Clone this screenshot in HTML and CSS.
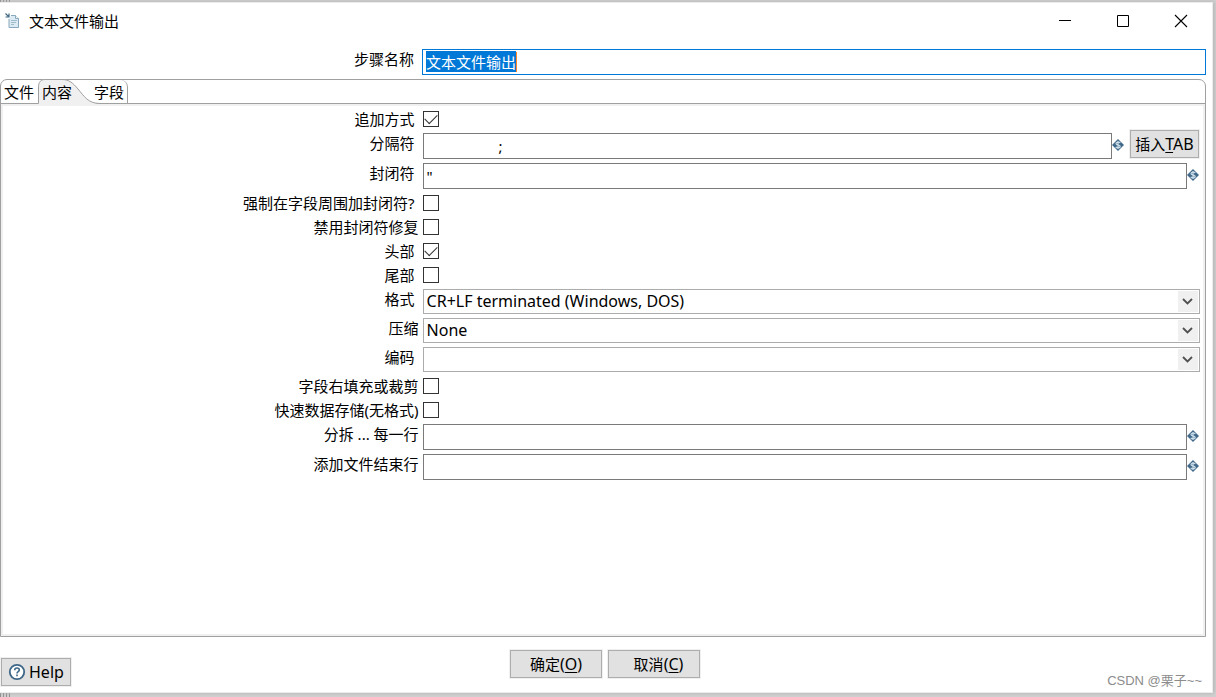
FILE: index.html
```html
<!DOCTYPE html>
<html lang="zh-CN">
<head>
<meta charset="utf-8">
<title>文本文件输出</title>
<link rel="stylesheet" href="styles.css">
</head>
<body>
<svg class="defs" aria-hidden="true">
  <symbol id="var" viewBox="0 0 12 14">
    <path d="M6 1L12 7L6 13L0 7Z" fill="#41698a"/>
    <path d="M8.200 5C7.500 3.800 4 3.800 4 5.700C4 7.300 8.200 6.700 8.200 8.500C8.200 10.300 4.400 10 3.800 8.900M6 3V11" fill="none" stroke="#c9dbe6" stroke-width="1.300"/>
  </symbol>
  <symbol id="arrow" viewBox="0 0 20 21">
    <path d="M5 8L9.500 12.500L14 8" fill="none" stroke="#505050" stroke-width="1.800"/>
  </symbol>
</svg>
<main class="window">
  <header class="titlebar">
    <svg class="app-icon" width="16" height="16" viewBox="0 0 16 16" aria-hidden="true">
      <path d="M4 6V14.500H13.500V5.500L10.500 2.500H6" fill="#dcebf3" stroke="#88a9bd"/>
      <path d="M10.500 2.500V5.500H13.500" fill="#fff" stroke="#88a9bd"/>
      <path d="M6 7.500H12M6 9.500H11M6 11.500H9" stroke="#9fbccb"/>
      <path d="M0.500 0.500L3.500 3.500M4 0.500V4H0.500" fill="none" stroke="#446b86" stroke-width="1.200"/>
    </svg>
    <h1 class="title">文本文件输出</h1>
    <button class="win-btn" type="button" aria-label="最小化"><svg width="14" height="14" viewBox="0 0 14 14"><path d="M1 6.500H13" stroke="#000"/></svg></button>
    <button class="win-btn" type="button" aria-label="最大化"><svg width="14" height="14" viewBox="0 0 14 14"><path d="M1.500 1.500H12.500V12.500H1.500Z" fill="none" stroke="#000"/></svg></button>
    <button class="win-btn" type="button" aria-label="关闭"><svg width="14" height="14" viewBox="0 0 14 14"><path d="M1 1L13 13M13 1L1 13" stroke="#000" stroke-width="1.1"/></svg></button>
  </header>

  <div class="step">
    <label class="label spaced" for="step">步骤名称</label>
    <div class="step-field">
      <input class="input active" id="step" type="text" value="文本文件输出" autofocus>
      <span class="caret"></span>
    </div>
  </div>

  <section class="panel">
    <nav class="tabs" role="tablist">
      <button class="tab first" type="button" role="tab">文件</button>
      <button class="tab selected" type="button" role="tab" aria-selected="true">
        <svg class="tab-shape" width="62" height="25" viewBox="0 0 62 25" aria-hidden="true">
          <path d="M0.500 25V8C0.500 3 3 0.500 7 0.500H24C31 0.500 35 4 40 10C46 17 50 24.500 62 24.500V25Z" fill="#f0f0f0"/>
          <path d="M0.500 24.500V8C0.500 3 3 0.500 7 0.500H24C31 0.500 35 4 40 10C46 17 50 24.500 62 24.500" fill="none" stroke="#a0a0a0"/>
        </svg>
        <span class="tab-text">内容</span>
      </button>
      <button class="tab last" type="button" role="tab">字段</button>
    </nav>
    <form class="form">
      <div class="row check"><label class="label spaced" for="append">追加方式</label><input class="box" id="append" type="checkbox" checked></div>
      <div class="row"><label class="label spaced" for="sep">分隔符</label>
        <div class="field"><input class="input" id="sep" type="text" value="&#9;;"><svg class="var" aria-hidden="true"><use href="#var"/></svg><button class="btn insert" type="button">插入<span class="latin"><u>T</u>AB</span></button></div></div>
      <div class="row"><label class="label spaced" for="enc">封闭符</label>
        <div class="field"><input class="input" id="enc" type="text" value="&quot;"><svg class="var" aria-hidden="true"><use href="#var"/></svg></div></div>
      <div class="row check"><label class="label spaced" for="force">强制在字段周围加封闭符?</label><input class="box" id="force" type="checkbox"></div>
      <div class="row check"><label class="label" for="fix">禁用封闭符修复</label><input class="box" id="fix" type="checkbox"></div>
      <div class="row check"><label class="label spaced" for="head">头部</label><input class="box" id="head" type="checkbox" checked></div>
      <div class="row check"><label class="label spaced" for="foot">尾部</label><input class="box" id="foot" type="checkbox"></div>
      <div class="row"><label class="label spaced" for="format">格式</label>
        <div class="combo"><select class="select" id="format"><option>CR+LF terminated (Windows, DOS)</option></select><svg class="arrow" aria-hidden="true"><use href="#arrow"/></svg></div></div>
      <div class="row"><label class="label" for="zip">压缩</label>
        <div class="combo"><select class="select" id="zip"><option>None</option></select><svg class="arrow" aria-hidden="true"><use href="#arrow"/></svg></div></div>
      <div class="row"><label class="label spaced" for="coding">编码</label>
        <div class="combo"><select class="select" id="coding"><option></option></select><svg class="arrow" aria-hidden="true"><use href="#arrow"/></svg></div></div>
      <div class="row check"><label class="label" for="pad">字段右填充或裁剪</label><input class="box" id="pad" type="checkbox"></div>
      <div class="row check"><label class="label" for="fast">快速数据存储(无格式)</label><input class="box" id="fast" type="checkbox"></div>
      <div class="row"><label class="label" for="split">分拆 ... 每一行</label>
        <div class="field"><input class="input" id="split" type="text"><svg class="var" aria-hidden="true"><use href="#var"/></svg></div></div>
      <div class="row"><label class="label" for="endline">添加文件结束行</label>
        <div class="field"><input class="input" id="endline" type="text"><svg class="var" aria-hidden="true"><use href="#var"/></svg></div></div>
    </form>
  </section>

  <footer class="footer">
    <div class="side"><button class="btn help" type="button"><svg width="18" height="18" viewBox="0 0 18 18" aria-hidden="true"><circle cx="9" cy="9" r="7.200" fill="#fff" stroke="#3d6687" stroke-width="1.800"/><path d="M6.700 7.200C6.700 4.300 11.300 4.400 11.300 7.100C11.300 8.700 9 8.700 9 10.400M9 11.600V13.200" fill="none" stroke="#3d6687" stroke-width="1.600"/></svg><span class="latin">Help</span></button></div>
    <div class="actions"><button class="btn action" type="button">确定<span class="latin">(<u>O</u>)</span></button><button class="btn action cancel" type="button">取消<span class="latin">(<u>C</u>)</span></button></div>
    <div class="side mark">CSDN @栗子~~</div>
  </footer>
</main>
<script src="main.js"></script>
</body>
</html>
```
FILE: styles.css
```css
* { box-sizing: border-box; }
body {
  margin: 0;
  min-height: 100vh;
  display: flex;
  padding: 3px 4px 5px 0;
  background:
    repeating-linear-gradient(90deg, #909090 0 1px, #d0d0d0 1px 3px) 0 0 / 10px 100% no-repeat,
    #d0d0d0;
  color: #000;
  font: 15px/20px "Noto Sans", "Noto Sans CJK SC", sans-serif;
}
button, input, select { font: inherit; color: inherit; }
.defs { position: absolute; width: 0; height: 0; }
.window {
  flex: 1;
  min-width: 0;
  display: flex;
  flex-direction: column;
  background: #fff;
  box-shadow: 0 0 0 1px #ececec, 1px 0 4px 1px #b0b0b0;
}
.titlebar { display: flex; align-items: center; height: 36px; padding: 0 2px 0 5px; }
.app-icon { margin-right: 8px; }
.title { flex: 1; margin: 0; font-size: 15px; font-weight: 400; }
.win-btn {
  width: 58px; height: 36px; padding: 0;
  display: grid; place-items: center;
  border: 0; background: none;
}
.step { display: grid; grid-template-columns: 35% 1fr; margin: 10px 6px 4px 0; }
.label { text-align: right; line-height: 20px; padding-right: 4px; white-space: nowrap; }
.spaced { padding-right: 8px; }
.step-field { position: relative; display: flex; }
.input {
  flex: 1; min-width: 0; width: 100%; height: 26px;
  padding: 0 3px; border: 1px solid #7a7a7a; border-radius: 0;
  background: #fff; outline: 0; tab-size: 72px;
}
.active { border-color: #0078d7; padding-bottom: 2px; }
.active::selection { background: #0078d7; color: #fff; }
.caret { position: absolute; left: 94px; top: 3px; width: 1px; height: 20px; background: #ff8728; }
.panel {
  flex: 1;
  margin-right: 6px;
  display: flex; flex-direction: column;
  border: 1px solid #a0a0a0;
  border-radius: 7px 7px 0 0;
}
.tabs { display: flex; height: 24px; border-bottom: 1px solid #a0a0a0; }
.tab { position: relative; height: 24px; padding: 0 3px; border: 0; background: none; line-height: 24px; }
.first { padding-right: 4px; }
.selected { padding: 0 18px 0 4px; }
.tab-shape { position: absolute; left: 0; top: -1px; }
.tab-text { position: relative; }
.last { padding-left: 4px; border-right: 1px solid #a0a0a0; border-radius: 0 7px 0 0; }
.form {
  flex: 1;
  display: flex; flex-direction: column; gap: 4px;
  padding: 3px 0;
  border: 2px solid #f0f0f0;
}
.row { display: grid; grid-template-columns: 35% 1fr; padding: 0 3px 0 1px; }
.check { align-items: center; }
.box {
  appearance: none;
  width: 16px; height: 16px; margin: 0;
  border: 1px solid #333; background: #fff;
  display: grid; place-items: center;
}
.box:checked::before {
  content: "";
  width: 11px; height: 6px; margin-bottom: 3px;
  border: solid #333; border-width: 0 0 1px 1px;
  transform: rotate(-45deg);
}
.field { display: flex; align-items: center; min-width: 0; height: 26px; padding-right: 1px; }
.var { width: 12px; height: 14px; flex: none; margin-bottom: 2px; }
.btn {
  height: 28px; padding: 0 5px;
  border: 1px solid #adadad; background: #e1e1e1;
  box-shadow: 0 0 0 1px #f0f0f0;
  white-space: nowrap; line-height: 26px;
}
.latin { font-size: 16px; }
u { text-underline-offset: 2px; text-decoration-skip-ink: none; }
.insert { width: 69px; padding: 0; margin: 0 0 4px 6px; }
.combo { position: relative; display: grid; }
.select {
  appearance: none; width: 100%; height: 25px;
  padding: 0 22px 2px 3px;
  border: 1px solid #acacac; border-radius: 0; background: #fff;
  font-size: 16px;
}
.arrow { position: absolute; right: 2px; top: 2px; width: 20px; height: 21px; background: #f0f0f0; pointer-events: none; }
.footer { display: flex; justify-content: space-between; margin-right: 2px; padding-top: 13px; height: 55px; }
.side { flex: 1; display: flex; align-items: flex-end; padding: 0 8px 6px 1px; }
.help { display: flex; align-items: center; gap: 3px; padding: 0 6px; }
.actions { display: flex; gap: 6px; }
.action { width: 92px; }
.cancel { padding-left: 14px; }
.mark { justify-content: flex-end; padding-bottom: 1px; color: #8c8c8c; font-family: "Liberation Sans", "Noto Sans CJK SC", sans-serif; font-size: 13px; }
```
FILE: main.js
```js
document.getElementById("step").select();
```
